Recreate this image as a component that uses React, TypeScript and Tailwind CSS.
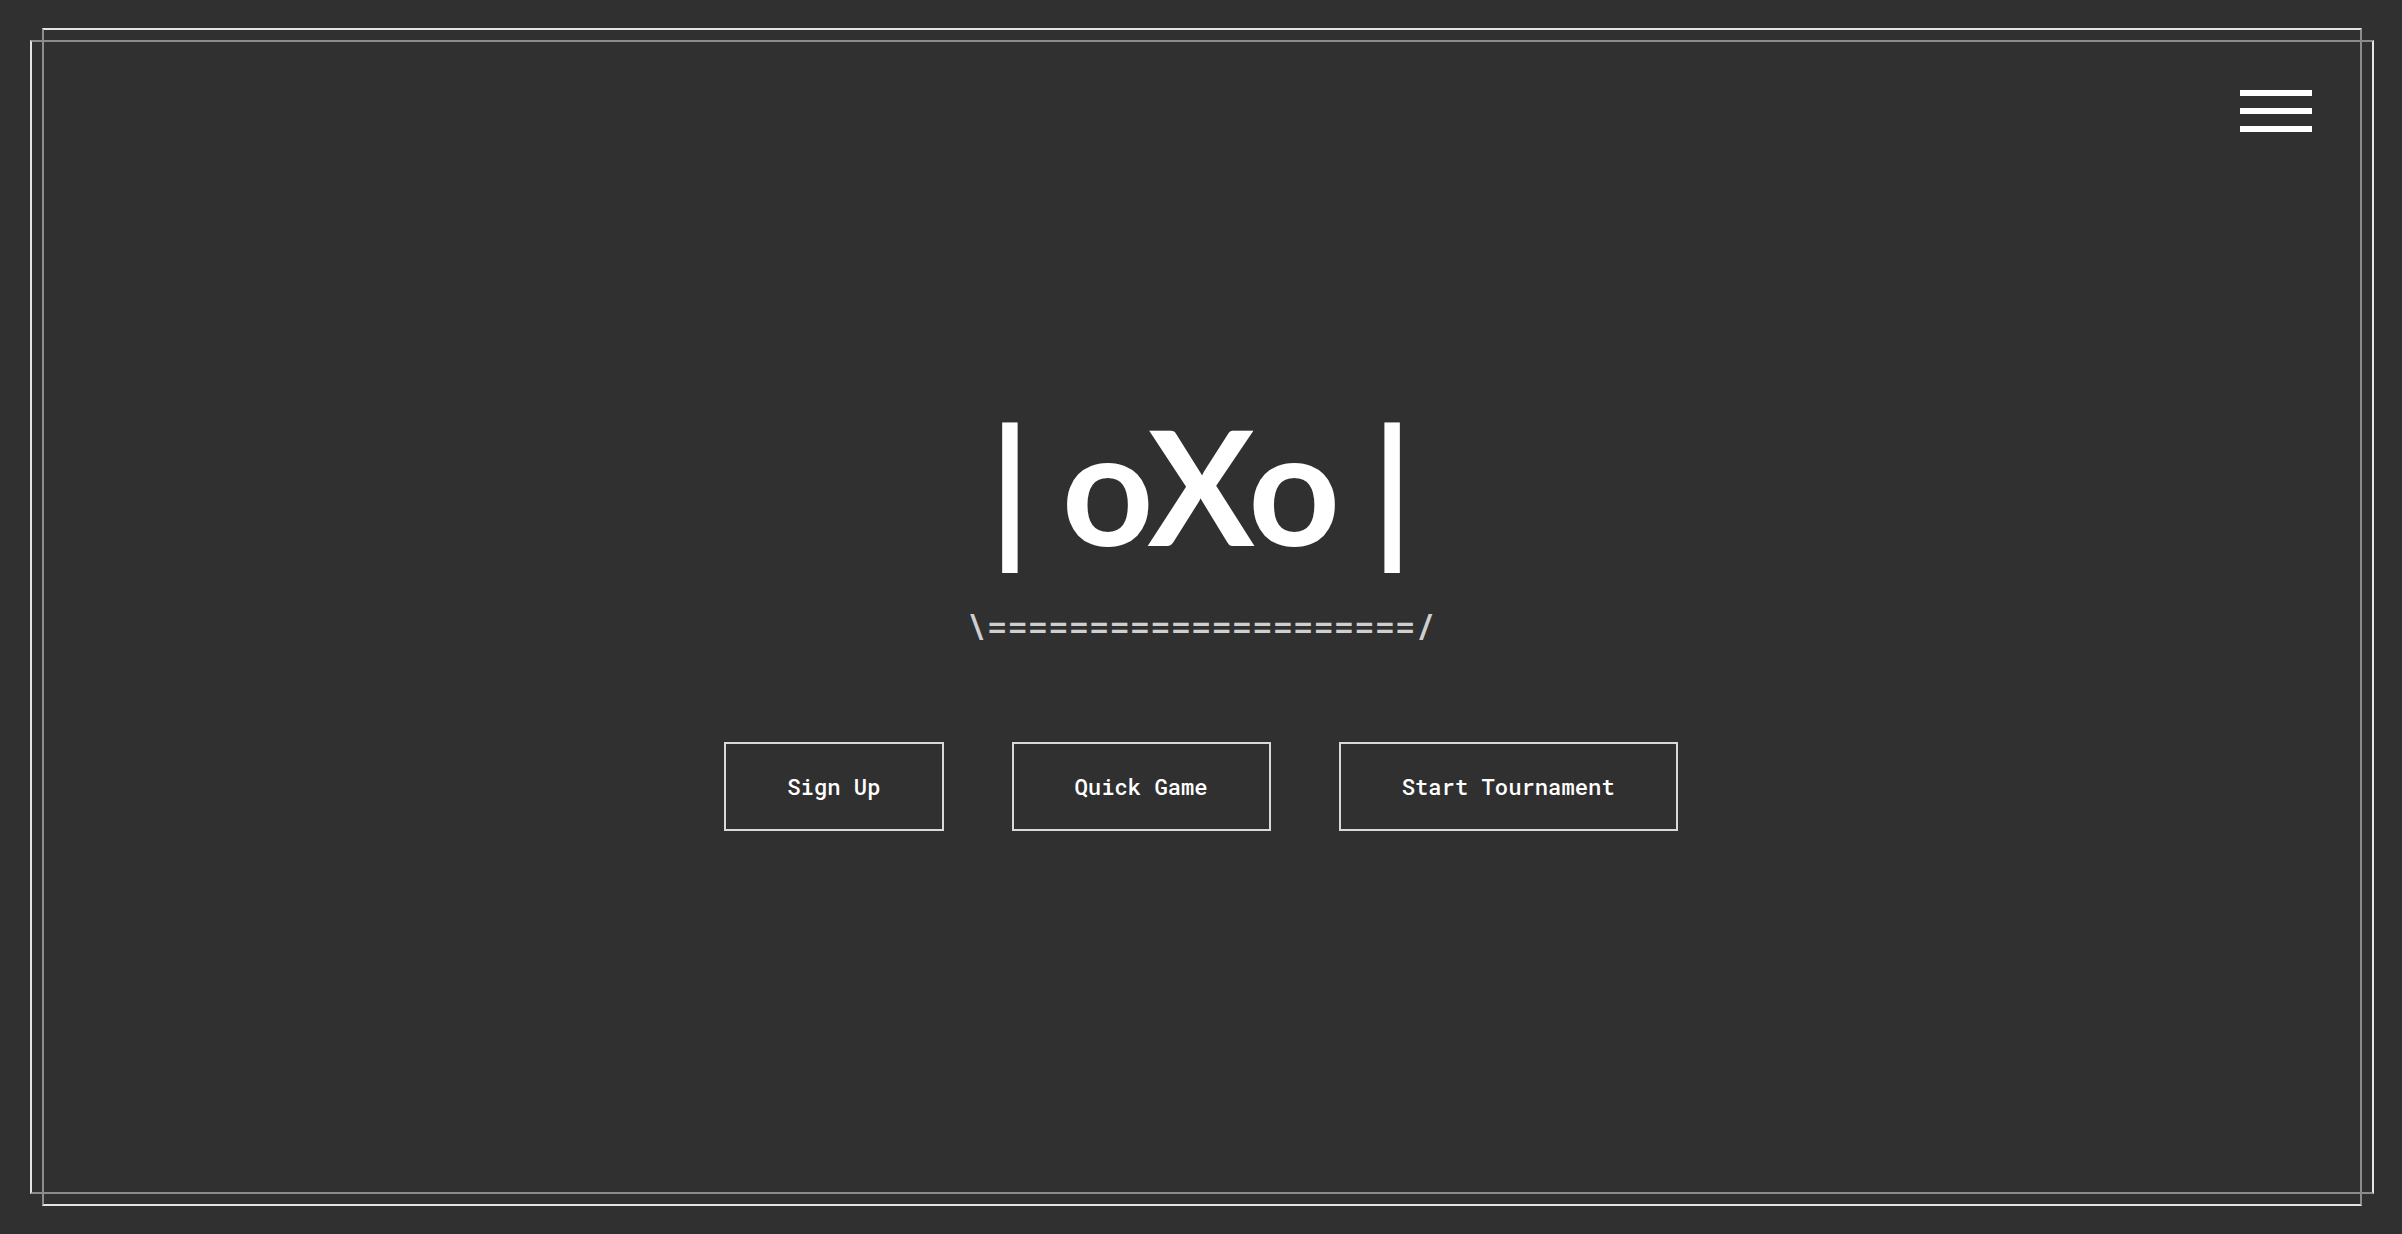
import React from "react";

export default function App() {
  const buttons = ["Sign Up", "Quick Game", "Start Tournament"];
  return (
    <div className="relative h-screen w-full overflow-hidden bg-[#303030]">
      {/* decorative double frame */}
      <div className="pointer-events-none absolute left-[42px] right-[40px] top-[28px] bottom-[28px] border-2 border-x-[#8c8c8c] border-y-[#e1e5e8]" />
      <div className="pointer-events-none absolute left-[30px] right-[28px] top-[40px] bottom-[40px] border-2 border-x-[#e1e5e8] border-y-[#8c8c8c]" />

      {/* hamburger menu */}
      <button
        aria-label="Menu"
        className="absolute left-[2240px] top-[90px] flex w-[72px] flex-col gap-[12px]"
      >
        <span className="block h-[6px] w-full bg-white" />
        <span className="block h-[6px] w-full bg-white" />
        <span className="block h-[6px] w-full bg-white" />
      </button>

      <main className="flex h-full flex-col items-center pt-[404px]">
        <h1 className="flex gap-[31px] font-['Lato',sans-serif] text-[160px] font-bold leading-none text-white">
          <span>|</span>
          <span>oXo</span>
          <span>|</span>
        </h1>
        <p className="mt-[44px] font-['Roboto_Mono','DejaVu_Sans_Mono',monospace] text-[34px] font-medium leading-none text-[#cfcfcf]">
          {"\\=====================/"}
        </p>
        <div className="mt-[100px] flex gap-[68px]">
          {buttons.map((b) => (
            <button
              key={b}
              className="flex h-[89px] items-center justify-center border-2 border-[#d9d9d9] px-[61px] font-['Roboto_Mono','DejaVu_Sans_Mono',monospace] text-[22.2px] font-medium text-white"
            >
              {b}
            </button>
          ))}
        </div>
      </main>
    </div>
  );
}
